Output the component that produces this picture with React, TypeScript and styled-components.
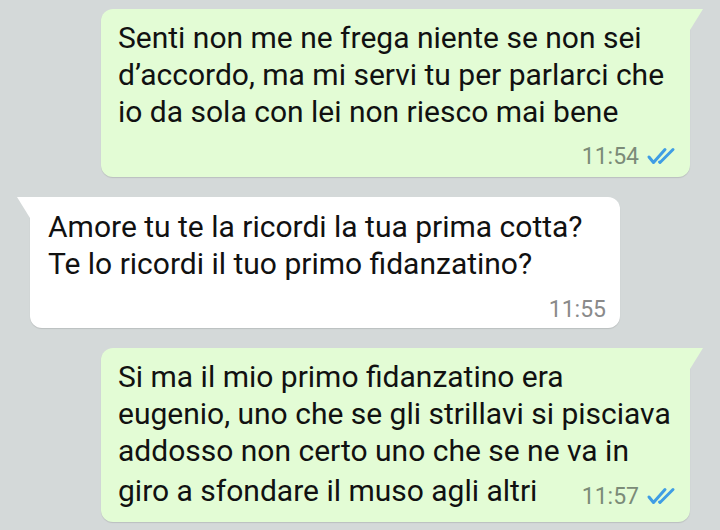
import React from 'react';
import styled, { createGlobalStyle } from 'styled-components';

const Global = createGlobalStyle`
  html, body { margin: 0; padding: 0; }
  body { background: #d4d9d9; font-family: Roboto, "Noto Sans", Arial, sans-serif; }
`;

const Chat = styled.div`
  width: 720px;
  height: 530px;
  overflow: hidden;
  box-sizing: border-box;
  padding-top: 9px;
  display: flex;
  flex-direction: column;
  gap: 20px;
  background: #d4d9d9;
`;

const Bubble = styled.div<{ $out?: boolean }>`
  position: relative;
  align-self: ${p => (p.$out ? 'flex-end' : 'flex-start')};
  margin: ${p => (p.$out ? '0 30px 0 0' : '0 0 0 30px')};
  width: ${p => (p.$out ? '589px' : '590px')};
  box-sizing: border-box;
  background: ${p => (p.$out ? '#e3fcd5' : '#ffffff')};
  border-radius: ${p => (p.$out ? '12px 0 12px 12px' : '0 12px 12px 12px')};
  padding: ${p => (p.$out ? '10px 12px 9px 17px' : '11px 14px 7px 18px')};
  box-shadow: 0 1px 1px rgba(0, 0, 0, 0.12);
  &::before {
    content: '';
    position: absolute;
    top: 0;
    width: 13px;
    height: 21px;
    background: inherit;
    ${p =>
      p.$out
        ? 'right: -13px; clip-path: polygon(0 0, 100% 0, 0 100%);'
        : 'left: -13px; clip-path: polygon(0 0, 100% 0, 100% 100%);'}
  }
`;

const Line = styled.div`
  font-size: 30px;
  line-height: 37px;
  color: #111111;
  white-space: nowrap;
`;

const Footer = styled.div<{ $inline?: boolean; $gap?: number }>`
  display: flex;
  align-items: ${p => (p.$inline ? 'flex-start' : 'center')};
  justify-content: ${p => (p.$inline ? 'space-between' : 'flex-end')};
  margin-top: ${p => (p.$inline ? 3 : p.$gap ?? 14)}px;
  height: ${p => (p.$inline ? '41px' : '24px')};
`;

const Meta = styled.div<{ $out?: boolean; $inline?: boolean }>`
  display: flex;
  align-items: center;
  align-self: ${p => (p.$inline ? 'flex-end' : 'center')};
  height: 24px;
  margin-bottom: ${p => (p.$inline ? '5px' : '0')};
  gap: 7px;
  font-size: 23px;
  color: ${p => (p.$out ? '#7b8b78' : '#8a8a8a')};
`;

const Ticks = () => (
  <svg width="32" height="18" viewBox="0 0 32 18" fill="none">
    <path d="M3 10 L7.5 15.5 L19 2.5" stroke="#3f9de4" strokeWidth="3" strokeLinecap="round" strokeLinejoin="round" />
    <path d="M13.5 15 L14 15.5 L27 2.5" stroke="#3f9de4" strokeWidth="3" strokeLinecap="round" strokeLinejoin="round" />
  </svg>
);

export default function App() {
  return (
    <>
      <Global />
      <Chat>
        <Bubble $out>
          <Line>Senti non me ne frega niente se non sei</Line>
          <Line>d’accordo, ma mi servi tu per parlarci che</Line>
          <Line>io da sola con lei non riesco mai bene</Line>
          <Footer>
            <Meta $out>
              11:54
              <Ticks />
            </Meta>
          </Footer>
        </Bubble>
        <Bubble>
          <Line>Amore tu te la ricordi la tua prima cotta?</Line>
          <Line>Te lo ricordi il tuo primo fidanzatino?</Line>
          <Footer $gap={15}>
            <Meta>11:55</Meta>
          </Footer>
        </Bubble>
        <Bubble $out>
          <Line>Si ma il mio primo fidanzatino era</Line>
          <Line>eugenio, uno che se gli strillavi si pisciava</Line>
          <Line>addosso non certo uno che se ne va in</Line>
          <Footer $inline>
            <Line>giro a sfondare il muso agli altri</Line>
            <Meta $out $inline>
              11:57
              <Ticks />
            </Meta>
          </Footer>
        </Bubble>
      </Chat>
    </>
  );
}
